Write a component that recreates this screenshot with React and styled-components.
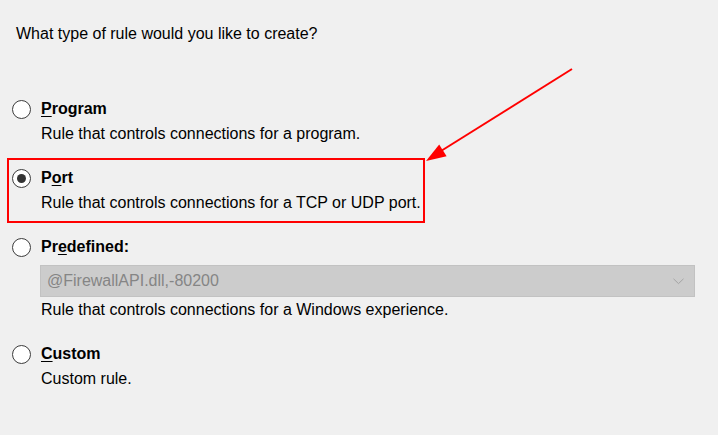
import React from "react";
import styled, { createGlobalStyle } from "styled-components";

const GlobalStyle = createGlobalStyle`
  html, body {
    margin: 0;
    padding: 0;
    background: #f0f0f0;
  }
  body {
    font-family: "Liberation Sans", Arial, sans-serif;
    font-size: 16px;
    color: #000;
  }
`;

const Page = styled.div`
  position: relative;
  width: 718px;
  height: 435px;
  box-sizing: border-box;
  padding: 24px 0 0 12px;
  overflow: hidden;
  background: #f0f0f0;
`;

const Question = styled.div`
  line-height: 20px;
  margin-left: 4px;
`;

const OptionList = styled.div`
  display: flex;
  flex-direction: column;
  gap: 24px;
  margin-top: 55px;
`;

const Option = styled.div`
  position: relative;
  display: grid;
  grid-template-columns: 19px 1fr;
  column-gap: 10px;
  align-items: start;

  ${(p) =>
    p.$highlight &&
    `
    &::after {
      content: "";
      position: absolute;
      left: -5px;
      top: -10px;
      width: 418px;
      height: 65px;
      box-sizing: border-box;
      border: 2px solid #ff0000;
      pointer-events: none;
    }
  `}
`;

const Radio = styled.span`
  display: flex;
  align-items: center;
  justify-content: center;
  width: 19px;
  height: 19px;
  margin-top: 1px;
  box-sizing: border-box;
  border-radius: 50%;
  border: 1px solid #3c3c3c;
  background: #fff;

  &::before {
    content: "";
    display: ${(p) => (p.$checked ? "block" : "none")};
    width: 9px;
    height: 9px;
    border-radius: 50%;
    background: #333;
  }
`;

const Body = styled.div`
  display: flex;
  flex-direction: column;
`;

const Title = styled.div`
  font-weight: bold;
  line-height: 20px;

  u {
    text-decoration-thickness: 1px;
    text-underline-offset: 2px;
  }
`;

const Desc = styled.div`
  line-height: 20px;
  margin-top: ${(p) => p.$mt || 5}px;
`;

const Select = styled.div`
  display: flex;
  align-items: center;
  justify-content: space-between;
  width: 655px;
  height: 32px;
  margin: 8px 0 0 -1px;
  padding: 0 10px 0 6px;
  box-sizing: border-box;
  background: #cccccc;
  border: 1px solid #c2c2c2;
  color: #858585;
  line-height: 20px;
`;

const Arrow = styled.svg`
  position: absolute;
  left: 0;
  top: 0;
  pointer-events: none;
`;

const Chevron = () => (
  <svg width="11" height="7" viewBox="0 0 11 7">
    <path d="M0.5 0.8 L5.5 5.6 L10.5 0.8" fill="none" stroke="#a4a4a4" strokeWidth="1" />
  </svg>
);

const options = [
  {
    key: "program",
    title: (
      <>
        <u>P</u>rogram
      </>
    ),
    desc: "Rule that controls connections for a program.",
  },
  {
    key: "port",
    title: (
      <>
        P<u>o</u>rt
      </>
    ),
    desc: "Rule that controls connections for a TCP or UDP port.",
    checked: true,
    highlight: true,
  },
  {
    key: "predefined",
    title: (
      <>
        Pr<u>e</u>defined:
      </>
    ),
    select: "@FirewallAPI.dll,-80200",
    desc: "Rule that controls connections for a Windows experience.",
  },
  {
    key: "custom",
    title: (
      <>
        <u>C</u>ustom
      </>
    ),
    desc: "Custom rule.",
  },
];

export default function App() {
  return (
    <>
      <GlobalStyle />
      <Page>
        <Question>What type of rule would you like to create?</Question>
        <OptionList>
          {options.map((o) => (
            <Option key={o.key} $highlight={o.highlight}>
              <Radio $checked={o.checked} />
              <Body>
                <Title>{o.title}</Title>
                {o.select && (
                  <Select>
                    <span>{o.select}</span>
                    <Chevron />
                  </Select>
                )}
                <Desc $mt={o.select ? 3 : 5}>{o.desc}</Desc>
              </Body>
            </Option>
          ))}
        </OptionList>
        <Arrow width="718" height="435" viewBox="0 0 718 435">
          <line x1="572" y1="69" x2="441" y2="151" stroke="#ff0000" strokeWidth="2" />
          <polygon points="426,161 439.2,144.4 446.6,156.2" fill="#ff0000" />
        </Arrow>
      </Page>
    </>
  );
}
